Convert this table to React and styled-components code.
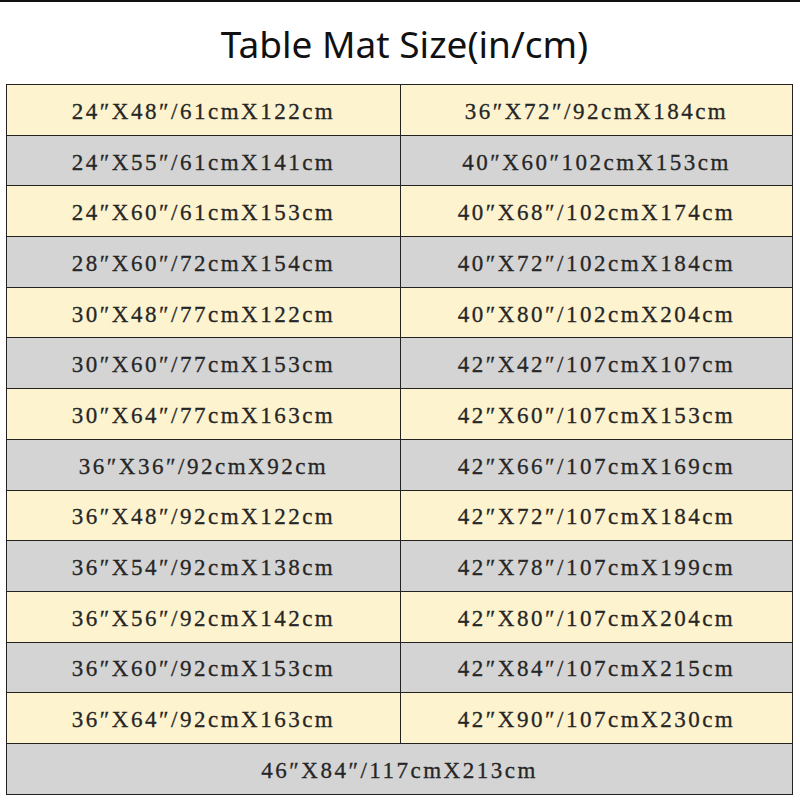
import React from "react";
import styled, { createGlobalStyle } from "styled-components";

const GlobalStyle = createGlobalStyle`
  html, body {
    margin: 0;
    padding: 0;
    background: #fff;
  }
`;

const Page = styled.div`
  width: 800px;
  height: 800px;
  box-sizing: border-box;
  border-top: 2px solid #111;
  padding: 0 7px 0 6px;
  overflow: hidden;
`;

const Title = styled.h1`
  height: 82px;
  margin: 0;
  display: flex;
  align-items: center;
  justify-content: center;
  font-family: "Noto Sans", "Open Sans", sans-serif;
  font-weight: 400;
  font-size: 37px;
  color: #111;
  padding: 1px 0 0 10px;
  box-sizing: border-box;
`;

const Table = styled.div`
  display: grid;
  grid-template-columns: 394px 1fr;
  grid-auto-rows: 50.7px;
  border-top: 1.5px solid #222;
  border-left: 1.5px solid #222;
`;

const Cell = styled.div`
  grid-column: ${(p) => (p.wide ? "1 / span 2" : "auto")};
  display: flex;
  align-items: center;
  justify-content: center;
  padding-top: 4px;
  box-sizing: border-box;
  background: ${(p) => (p.shade ? "#d4d4d4" : "#fdf3cf")};
  border-right: 1.5px solid #222;
  border-bottom: 1.5px solid #222;
  font-family: "Liberation Serif", "DejaVu Serif", serif;
  font-size: 23px;
  letter-spacing: 2.5px;
  color: #262626;
  -webkit-text-stroke: 0.3px #262626;
  white-space: nowrap;
`;

const rows = [
  ["24″X48″/61cmX122cm", "36″X72″/92cmX184cm"],
  ["24″X55″/61cmX141cm", "40″X60″102cmX153cm"],
  ["24″X60″/61cmX153cm", "40″X68″/102cmX174cm"],
  ["28″X60″/72cmX154cm", "40″X72″/102cmX184cm"],
  ["30″X48″/77cmX122cm", "40″X80″/102cmX204cm"],
  ["30″X60″/77cmX153cm", "42″X42″/107cmX107cm"],
  ["30″X64″/77cmX163cm", "42″X60″/107cmX153cm"],
  ["36″X36″/92cmX92cm", "42″X66″/107cmX169cm"],
  ["36″X48″/92cmX122cm", "42″X72″/107cmX184cm"],
  ["36″X54″/92cmX138cm", "42″X78″/107cmX199cm"],
  ["36″X56″/92cmX142cm", "42″X80″/107cmX204cm"],
  ["36″X60″/92cmX153cm", "42″X84″/107cmX215cm"],
  ["36″X64″/92cmX163cm", "42″X90″/107cmX230cm"],
];

export default function App() {
  return (
    <>
      <GlobalStyle />
      <Page>
        <Title>Table Mat Size(in/cm)</Title>
        <Table>
          {rows.map((r, i) =>
            r.map((text, j) => (
              <Cell key={`${i}-${j}`} shade={i % 2 === 1}>
                {text}
              </Cell>
            ))
          )}
          <Cell wide shade>
            46″X84″/117cmX213cm
          </Cell>
        </Table>
      </Page>
    </>
  );
}
